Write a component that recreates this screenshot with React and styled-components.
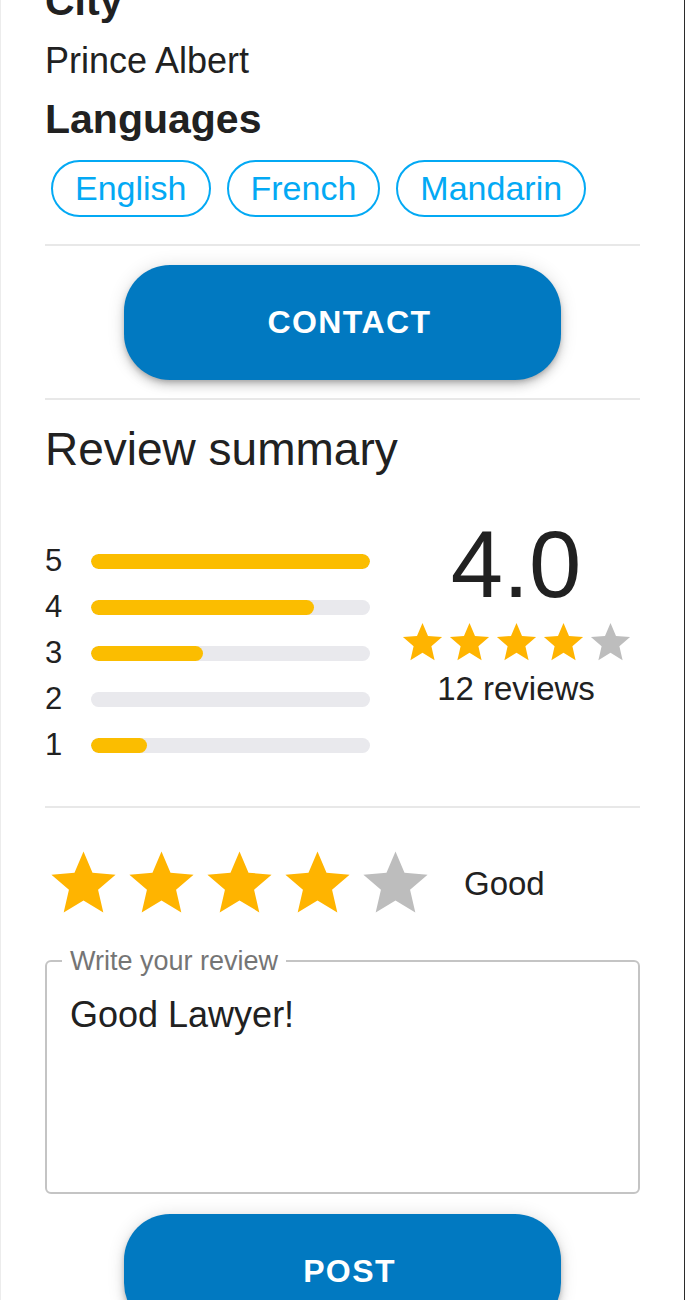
import React from 'react';
import styled, { createGlobalStyle } from 'styled-components';

const GlobalStyle = createGlobalStyle`
  html, body {
    margin: 0;
    padding: 0;
    background: #ffffff;
    overflow: hidden;
  }
  body {
    font-family: 'Liberation Sans', Arial, sans-serif;
    color: #212121;
  }
  * {
    box-sizing: border-box;
  }
`;

const STAR_PATH =
  'M12 17.27L18.18 21l-1.64-7.03L22 9.24l-7.19-.61L12 2 9.19 8.63 2 9.24l5.46 4.73L5.82 21z';

const Star = ({ size, filled }) => (
  <St.StarIcon $size={size} viewBox="0 0 24 24" aria-hidden="true">
    <path d={STAR_PATH} fill={filled ? '#ffb400' : '#bdbdbd'} />
  </St.StarIcon>
);

const Stars = ({ value, size }) => (
  <St.StarRow>
    {[1, 2, 3, 4, 5].map((n) => (
      <Star key={n} size={size} filled={n <= value} />
    ))}
  </St.StarRow>
);

const bars = [
  { label: '5', pct: 100 },
  { label: '4', pct: 80 },
  { label: '3', pct: 40 },
  { label: '2', pct: 0 },
  { label: '1', pct: 20 },
];

const languages = ['English', 'French', 'Mandarin'];

const App = () => {
  return (
    <>
      <GlobalStyle />
      <St.Frame>
        <St.Content>
          <St.FieldTitle>City</St.FieldTitle>
          <St.FieldValue>Prince Albert</St.FieldValue>
          <St.FieldTitle $top={13}>Languages</St.FieldTitle>

          <St.ChipList>
            {languages.map((lang) => (
              <St.Chip key={lang}>{lang}</St.Chip>
            ))}
          </St.ChipList>

          <St.Divider $top={27} />
          <St.ActionButton type="button" $top={19}>
            CONTACT
          </St.ActionButton>
          <St.Divider $top={18} />

          <St.SummaryTitle>Review summary</St.SummaryTitle>

          <St.Summary>
            <St.BarList>
              {bars.map((bar) => (
                <St.BarRow key={bar.label}>
                  <St.BarLabel>{bar.label}</St.BarLabel>
                  <St.BarTrack>
                    <St.BarFill style={{ width: `${bar.pct}%` }} />
                  </St.BarTrack>
                </St.BarRow>
              ))}
            </St.BarList>

            <St.Score>
              <St.ScoreValue>4.0</St.ScoreValue>
              <Stars value={4} size={47} />
              <St.ReviewCount>12 reviews</St.ReviewCount>
            </St.Score>
          </St.Summary>

          <St.Divider $top={35} />

          <St.RateRow>
            <Stars value={4} size={77} />
            <St.RateLabel>Good</St.RateLabel>
          </St.RateRow>

          <St.ReviewBox>
            <St.ReviewLegend>Write your review</St.ReviewLegend>
            <St.ReviewText>Good Lawyer!</St.ReviewText>
          </St.ReviewBox>

          <St.ActionButton type="button" $top={20}>
            POST
          </St.ActionButton>
        </St.Content>
      </St.Frame>
    </>
  );
};

export default App;

const St = {
  Frame: styled.div`
    width: 685px;
    height: 1300px;
    overflow: hidden;
    border-left: 1px solid #ececec;
    border-right: 1px solid #2b2b2b;
    background: #ffffff;
  `,

  Content: styled.div`
    display: flex;
    flex-direction: column;
    align-items: stretch;
    margin-top: -23px;
    padding: 0 44px;
  `,

  FieldTitle: styled.h2`
    margin: ${(p) => p.$top || 0}px 0 0;
    font-size: 41px;
    line-height: 48px;
    font-weight: 700;
    color: #212121;
  `,

  FieldValue: styled.p`
    margin: 15px 0 0;
    font-size: 36px;
    line-height: 42px;
    color: #212121;
  `,

  ChipList: styled.div`
    display: flex;
    gap: 16px;
    margin: 17px 0 0 6px;
  `,

  Chip: styled.span`
    display: inline-flex;
    align-items: center;
    height: 57px;
    padding: 0 22px;
    border: 2px solid #03a9f4;
    border-radius: 29px;
    color: #03a9f4;
    font-size: 34px;
  `,

  Divider: styled.hr`
    margin: ${(p) => p.$top}px 0 0;
    border: none;
    height: 2px;
    background: #e8e8e8;
  `,

  ActionButton: styled.button`
    align-self: center;
    width: 437px;
    height: 115px;
    margin-top: ${(p) => p.$top}px;
    padding: 0 0 0 14px;
    flex-shrink: 0;
    border: none;
    border-radius: 46px;
    background: #0179c1;
    color: #ffffff;
    font-family: 'Liberation Sans', Arial, sans-serif;
    font-size: 32px;
    font-weight: 700;
    letter-spacing: 1.4px;
    box-shadow: 0 3px 5px -1px rgba(0, 0, 0, 0.2), 0 6px 10px 0 rgba(0, 0, 0, 0.14),
      0 1px 18px 0 rgba(0, 0, 0, 0.12);
  `,

  SummaryTitle: styled.h2`
    margin: 22px 0 0;
    font-size: 46px;
    line-height: 54px;
    font-weight: 400;
    color: #212121;
  `,

  Summary: styled.div`
    display: grid;
    grid-template-columns: 325px 1fr;
    column-gap: 22px;
    align-items: start;
    margin-top: 41px;
  `,

  BarList: styled.div`
    display: flex;
    flex-direction: column;
    padding: 21px 0 3px;
  `,

  BarRow: styled.div`
    display: flex;
    align-items: center;
    gap: 16px;
    height: 46px;
  `,

  BarLabel: styled.span`
    width: 30px;
    font-size: 31px;
    line-height: 36px;
    color: #212121;
  `,

  BarTrack: styled.div`
    flex: 1;
    height: 15px;
    border-radius: 8px;
    background: #e9e9ed;
    overflow: hidden;
  `,

  BarFill: styled.div`
    height: 100%;
    border-radius: 8px;
    background: #fbbd00;
  `,

  Score: styled.div`
    display: flex;
    flex-direction: column;
    align-items: center;
    padding-top: 1px;
  `,

  ScoreValue: styled.div`
    font-size: 94px;
    line-height: 94px;
    color: #212121;
    margin-bottom: 7px;
  `,

  ReviewCount: styled.div`
    margin-top: 3px;
    font-size: 33px;
    line-height: 40px;
    color: #212121;
  `,

  StarRow: styled.div`
    display: flex;
    align-items: center;
  `,

  StarIcon: styled.svg`
    display: block;
    width: ${(p) => p.$size}px;
    height: ${(p) => p.$size}px;
    margin-right: ${(p) => (p.$size > 60 ? 1 : 0)}px;
  `,

  RateRow: styled.div`
    display: flex;
    align-items: center;
    gap: 29px;
    margin-top: 37px;
  `,

  RateLabel: styled.span`
    font-size: 33px;
    color: #212121;
  `,

  ReviewBox: styled.fieldset`
    margin: 23px 0 0;
    padding: 0 15px;
    height: 249px;
    border: 2px solid #c4c4c4;
    border-radius: 6px;
    min-width: 0;
  `,

  ReviewLegend: styled.legend`
    padding: 0 8px;
    font-size: 27px;
    line-height: 32px;
    color: #757575;
  `,

  ReviewText: styled.div`
    margin-top: 17px;
    padding-left: 8px;
    font-size: 36px;
    line-height: 42px;
    color: #212121;
  `,
};
